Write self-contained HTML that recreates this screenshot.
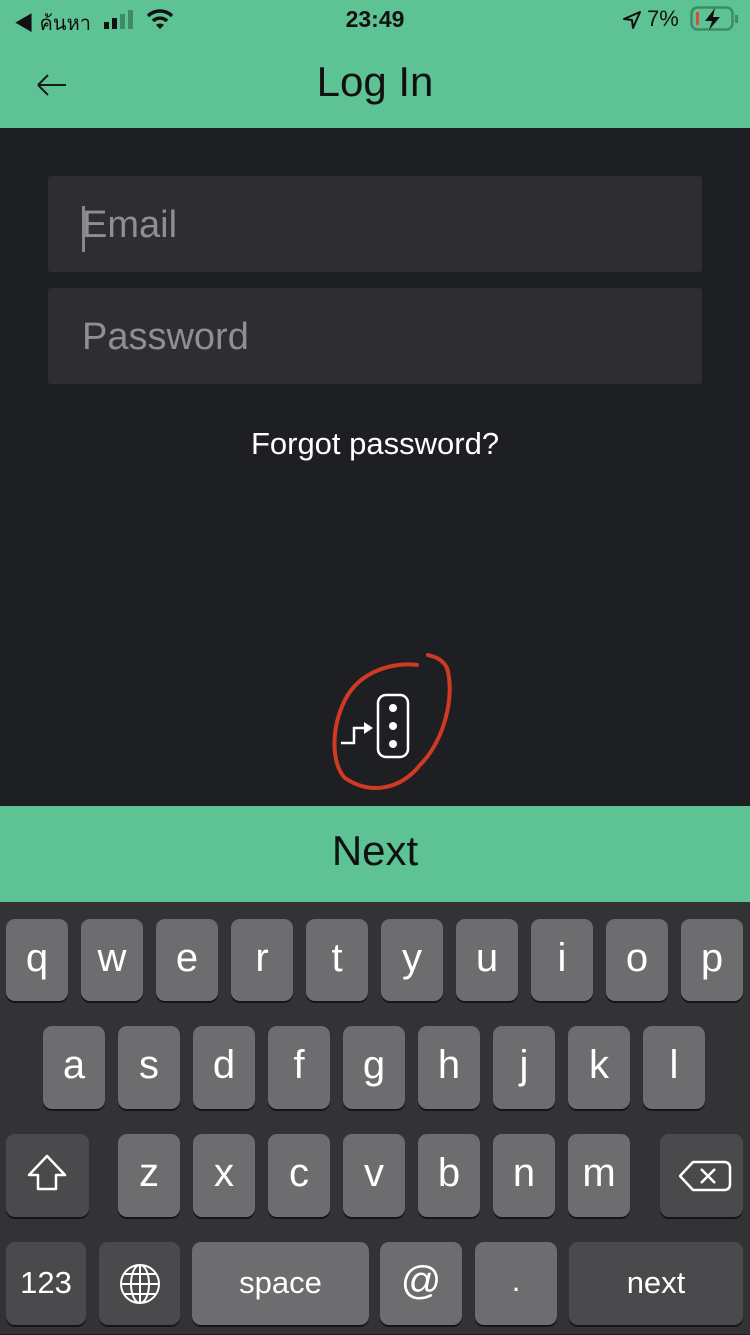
<!DOCTYPE html>
<html><head><meta charset="utf-8"><style>
*{margin:0;padding:0;box-sizing:border-box}
body{width:750px;height:1334px;background:#1e1f23;position:relative;overflow:hidden;font-family:"Liberation Sans","Noto Sans CJK SC",sans-serif}
.a{position:absolute}
.k{position:absolute;background:#6d6d70;border-radius:9px;color:#fff;font-size:40px;text-align:center;box-shadow:0 2px 0 #151517}
.s{background:#4a4a4d}
</style></head><body>
<div class="a" style="left:0;top:0;width:750px;height:128px;background:#5ec394"></div>
<div class="a" style="left:14px;top:7px;font-size:20px;color:#111">◀ ค้นหา</div>
<svg class="a" style="left:104px;top:10px" width="34" height="20"><rect x="0" y="12" width="5" height="7" fill="#111"/><rect x="8" y="8" width="5" height="11" fill="#111"/><rect x="16" y="4" width="5" height="15" fill="#3d8c66"/><rect x="24" y="0" width="5" height="19" fill="#3d8c66"/></svg>
<svg class="a" style="left:146px;top:8px" width="28" height="22" viewBox="0 0 28 22"><path d="M2 8 A17 17 0 0 1 26 8" stroke="#111" stroke-width="3.5" fill="none"/><path d="M7 13 A10 10 0 0 1 21 13" stroke="#111" stroke-width="3.5" fill="none"/><path d="M10 17 L14 21 L18 17 A6 6 0 0 0 10 17Z" fill="#111"/></svg>
<div class="a" style="left:0;width:750px;top:6px;text-align:center;font-size:23px;font-weight:bold;color:#111">23:49</div>
<svg class="a" style="left:622px;top:10px" width="20" height="20"><path d="M18 2 L2 9 L10 10 L11 18Z" stroke="#111" stroke-width="2" fill="none" stroke-linejoin="round"/></svg>
<div class="a" style="left:647px;top:6px;font-size:22px;color:#111">7%</div>
<svg class="a" style="left:690px;top:6px" width="50" height="26"><rect x="1.5" y="1.5" width="41" height="22" rx="6" fill="none" stroke="#3d8c66" stroke-width="2.5"/><rect x="6" y="6" width="3" height="13" fill="#e04a3a"/><rect x="45" y="9" width="3" height="8" fill="#3d8c66"/><path d="M25 2 L15 15 L22 15 L19 24 L30 11 L23 11Z" fill="#111"/></svg>
<svg class="a" style="left:36px;top:72px" width="32" height="26"><path d="M2 13 H30 M2 13 L12 3 M2 13 L12 23" stroke="#1a1a1a" stroke-width="2" fill="none"/></svg>
<div class="a" style="left:0;width:750px;top:58px;text-align:center;font-size:42px;color:#111">Log In</div>
<div class="a" style="left:48px;top:176px;width:654px;height:96px;background:#2d2d32;border-radius:3px"></div>
<div class="a" style="left:82px;top:206px;width:3px;height:46px;background:#888"></div>
<div class="a" style="left:82px;top:204px;font-size:38px;color:#8e8e93">Email</div>
<div class="a" style="left:48px;top:288px;width:654px;height:96px;background:#2d2d32;border-radius:3px"></div>
<div class="a" style="left:82px;top:316px;font-size:38px;color:#8e8e93">Password</div>
<div class="a" style="left:0;width:750px;top:426px;text-align:center;font-size:31px;color:#fff">Forgot password?</div>
<svg class="a" style="left:320px;top:650px" width="150" height="150" viewBox="0 0 150 150"><path d="M97 15 C75 12 40 20 25 50 C10 80 12 115 25 128 C50 145 80 140 100 115 C125 90 135 45 127 18 C122 8 112 6 108 5" stroke="#d03a24" stroke-width="4" fill="none" stroke-linecap="round"/><rect x="58" y="45" width="30" height="62" rx="8" stroke="#fff" stroke-width="2.5" fill="none"/><circle cx="73" cy="58" r="4" fill="#fff"/><circle cx="73" cy="76" r="4" fill="#fff"/><circle cx="73" cy="94" r="4" fill="#fff"/><path d="M21 93 H34 V78 H46" stroke="#fff" stroke-width="2.5" fill="none"/><path d="M44 72 L53 78 L44 84Z" fill="#fff"/></svg>
<div class="a" style="left:0;top:806px;width:750px;height:96px;background:#5ec394;text-align:center;font-size:42px;line-height:90px;color:#111">Next</div>
<div class="a" style="left:0;top:902px;width:750px;height:432px;background:#333336"></div>
<div class="k" style="left:6px;top:919px;width:62px;height:82px;line-height:78px">q</div>
<div class="k" style="left:81px;top:919px;width:62px;height:82px;line-height:78px">w</div>
<div class="k" style="left:156px;top:919px;width:62px;height:82px;line-height:78px">e</div>
<div class="k" style="left:231px;top:919px;width:62px;height:82px;line-height:78px">r</div>
<div class="k" style="left:306px;top:919px;width:62px;height:82px;line-height:78px">t</div>
<div class="k" style="left:381px;top:919px;width:62px;height:82px;line-height:78px">y</div>
<div class="k" style="left:456px;top:919px;width:62px;height:82px;line-height:78px">u</div>
<div class="k" style="left:531px;top:919px;width:62px;height:82px;line-height:78px">i</div>
<div class="k" style="left:606px;top:919px;width:62px;height:82px;line-height:78px">o</div>
<div class="k" style="left:681px;top:919px;width:62px;height:82px;line-height:78px">p</div>
<div class="k" style="left:43px;top:1026px;width:62px;height:83px;line-height:78px">a</div>
<div class="k" style="left:118px;top:1026px;width:62px;height:83px;line-height:78px">s</div>
<div class="k" style="left:193px;top:1026px;width:62px;height:83px;line-height:78px">d</div>
<div class="k" style="left:268px;top:1026px;width:62px;height:83px;line-height:78px">f</div>
<div class="k" style="left:343px;top:1026px;width:62px;height:83px;line-height:78px">g</div>
<div class="k" style="left:418px;top:1026px;width:62px;height:83px;line-height:78px">h</div>
<div class="k" style="left:493px;top:1026px;width:62px;height:83px;line-height:78px">j</div>
<div class="k" style="left:568px;top:1026px;width:62px;height:83px;line-height:78px">k</div>
<div class="k" style="left:643px;top:1026px;width:62px;height:83px;line-height:78px">l</div>
<div class="k s" style="left:6px;top:1134px;width:83px;height:83px"><svg width="83" height="83"><path d="M41 22 L23 41 H32 V55 H50 V41 H59Z" stroke="#fff" stroke-width="2.5" fill="none" stroke-linejoin="round"/></svg></div>
<div class="k" style="left:118px;top:1134px;width:62px;height:83px;line-height:78px">z</div>
<div class="k" style="left:193px;top:1134px;width:62px;height:83px;line-height:78px">x</div>
<div class="k" style="left:268px;top:1134px;width:62px;height:83px;line-height:78px">c</div>
<div class="k" style="left:343px;top:1134px;width:62px;height:83px;line-height:78px">v</div>
<div class="k" style="left:418px;top:1134px;width:62px;height:83px;line-height:78px">b</div>
<div class="k" style="left:493px;top:1134px;width:62px;height:83px;line-height:78px">n</div>
<div class="k" style="left:568px;top:1134px;width:62px;height:83px;line-height:78px">m</div>
<div class="k s" style="left:660px;top:1134px;width:83px;height:83px"><svg width="83" height="83"><path d="M33 28 H64 Q70 28 70 34 V50 Q70 56 64 56 H33 L20 42Z" stroke="#fff" stroke-width="2.5" fill="none" stroke-linejoin="round"/><path d="M41 35 L55 49 M55 35 L41 49" stroke="#fff" stroke-width="2.5"/></svg></div>
<div class="k s" style="left:6px;top:1242px;width:80px;height:83px;line-height:82px;font-size:31px">123</div>
<div class="k s" style="left:99px;top:1242px;width:81px;height:83px"><svg width="81" height="83"><g stroke="#fff" stroke-width="2" fill="none"><circle cx="41" cy="42" r="19"/><ellipse cx="41" cy="42" rx="9" ry="19"/><path d="M41 23 V61 M22 42 H60 M25 32 H57 M25 52 H57"/></g></svg></div>
<div class="k" style="left:192px;top:1242px;width:177px;height:83px;line-height:82px;font-size:31px">space</div>
<div class="k" style="left:380px;top:1242px;width:82px;height:83px;line-height:78px">@</div>
<div class="k" style="left:475px;top:1242px;width:82px;height:83px;line-height:78px;font-size:31px">.</div>
<div class="k s" style="left:569px;top:1242px;width:174px;height:83px;line-height:82px;font-size:31px">next</div>
</body></html>
